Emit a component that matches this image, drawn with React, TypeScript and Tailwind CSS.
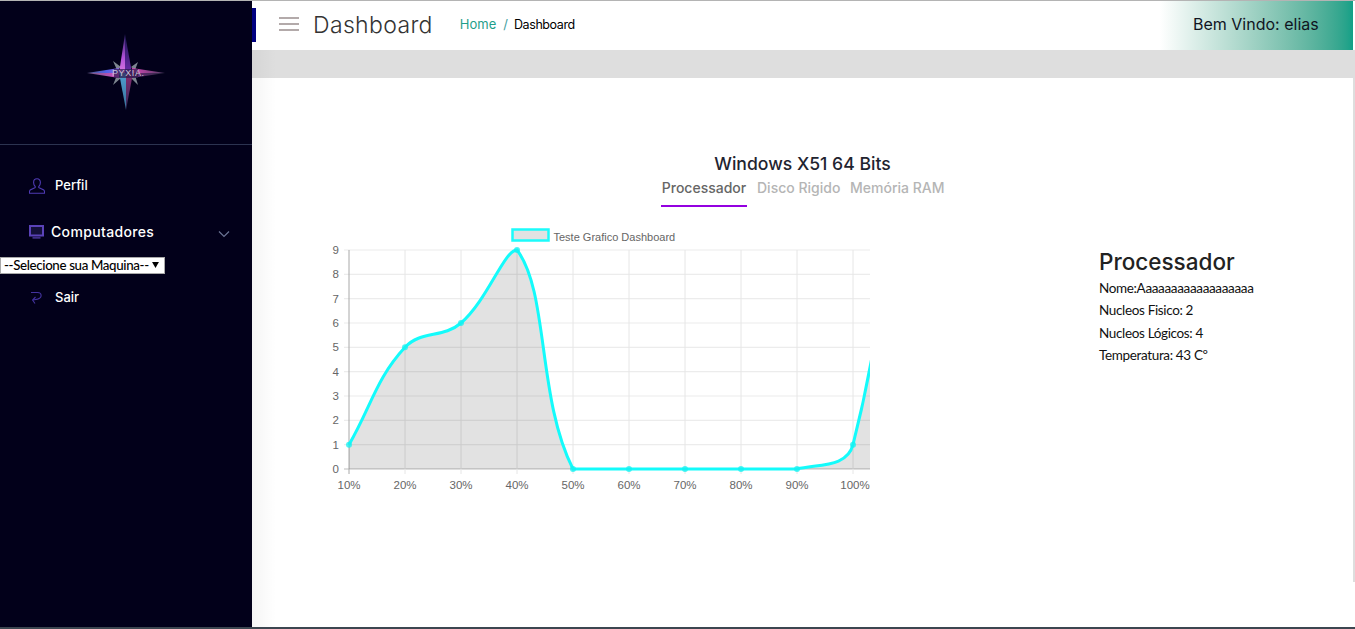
import React from 'react';

const ticks = [349, 405, 461, 517, 573, 629, 685, 741, 797, 853];
const labels = ['10%', '20%', '30%', '40%', '50%', '60%', '70%', '80%', '90%', '100%'];
const values = [1, 5, 6, 9, 0, 0, 0, 0, 0, 1, 18];

const yFor = (v: number) => 469 - v * (219 / 9);

// same spline as chart.js with tension 0.4
function buildCurve() {
  const pts = values.map((v, i) => ({ x: 349 + i * 56, y: yFor(v) }));
  const ctrl = pts.map((p, i) => {
    const prev = pts[i - 1] ?? p;
    const next = pts[i + 1] ?? p;
    const d01 = Math.hypot(p.x - prev.x, p.y - prev.y);
    const d12 = Math.hypot(next.x - p.x, next.y - p.y);
    const sum = d01 + d12 || 1;
    const fa = (0.4 * d01) / sum;
    const fb = (0.4 * d12) / sum;
    const clampY = (y: number) => (i >= 9 ? y : Math.min(469, Math.max(250, y)));
    return {
      px: p.x - fa * (next.x - prev.x),
      py: clampY(p.y - fa * (next.y - prev.y)),
      nx: p.x + fb * (next.x - prev.x),
      ny: clampY(p.y + fb * (next.y - prev.y)),
    };
  });
  let d = `M${pts[0].x} ${pts[0].y}`;
  for (let i = 1; i < pts.length; i++) {
    d += ` C${ctrl[i - 1].nx} ${ctrl[i - 1].ny} ${ctrl[i].px} ${ctrl[i].py} ${pts[i].x} ${pts[i].y}`;
  }
  return { d, pts };
}

function Chart() {
  const { d, pts } = buildCurve();
  return (
    <svg width="560" height="275" viewBox="320 222 560 275" className="block shrink-0">
      <defs>
        <clipPath id="plot">
          <rect x="340" y="240" width="530" height="240" />
        </clipPath>
      </defs>
      <rect x="512.5" y="229.5" width="36" height="11" fill="#e2e2e2" stroke="#1dfbfb" strokeWidth="2.5" />
      <text x="553.5" y="241" fontSize="11" fill="#666" fontFamily="Liberation Sans, sans-serif">
        Teste Grafico Dashboard
      </text>
      {[0, 1, 2, 3, 4, 5, 6, 7, 8, 9].map((v) => (
        <g key={v}>
          <line x1="344" x2="870" y1={yFor(v)} y2={yFor(v)} stroke={v === 0 ? '#bdbdbd' : '#ececec'} strokeWidth="1.2" />
          <text x="339" y={yFor(v) + 4} textAnchor="end" fontSize="11.5" fill="#666" fontFamily="Liberation Sans, sans-serif">
            {v}
          </text>
        </g>
      ))}
      {ticks.map((x, i) => (
        <g key={x}>
          <line x1={x} x2={x} y1="250" y2="474" stroke={i === 0 ? '#a8a8a8' : '#e6e6e6'} strokeWidth="1" />
          <text x={i === 9 ? x + 2 : x} y="489" textAnchor="middle" fontSize="11.5" fill="#666" fontFamily="Liberation Sans, sans-serif">
            {labels[i]}
          </text>
        </g>
      ))}
      <g clipPath="url(#plot)">
        <path d={`${d} L909 469 L349 469 Z`} fill="rgba(0,0,0,0.115)" />
        <path d={d} fill="none" stroke="#14fbfb" strokeWidth="3" />
        {pts.map((p) => (
          <circle key={p.x} cx={p.x} cy={p.y} r="3" fill="rgba(20,240,240,0.75)" />
        ))}
      </g>
    </svg>
  );
}

function Logo() {
  return (
    <div className="relative w-[80px] h-[78px]">
      <svg width="80" height="78" viewBox="0 0 80 78" className="block">
        <defs>
          <linearGradient id="upL" x1="0" y1="0" x2="0" y2="1">
            <stop offset="0" stopColor="#2c2060" />
            <stop offset="0.6" stopColor="#b050d8" />
            <stop offset="1" stopColor="#d878e0" />
          </linearGradient>
          <linearGradient id="upR" x1="0" y1="0" x2="0" y2="1">
            <stop offset="0" stopColor="#1c1650" />
            <stop offset="1" stopColor="#6a2aa8" />
          </linearGradient>
          <linearGradient id="downL" x1="0" y1="0" x2="0" y2="1">
            <stop offset="0" stopColor="#4f9fd0" />
            <stop offset="1" stopColor="#3a6f98" />
          </linearGradient>
          <linearGradient id="downR" x1="0" y1="0" x2="0" y2="1">
            <stop offset="0" stopColor="#8a2a70" />
            <stop offset="1" stopColor="#2f2a58" />
          </linearGradient>
          <linearGradient id="leftT" x1="0" y1="0" x2="1" y2="0">
            <stop offset="0" stopColor="#5a5a80" />
            <stop offset="0.6" stopColor="#4f62e8" />
            <stop offset="1" stopColor="#8a60e0" />
          </linearGradient>
          <linearGradient id="leftB" x1="0" y1="0" x2="1" y2="0">
            <stop offset="0" stopColor="#6a5a80" />
            <stop offset="1" stopColor="#d850c8" />
          </linearGradient>
          <linearGradient id="rightT" x1="0" y1="0" x2="1" y2="0">
            <stop offset="0" stopColor="#d848b8" />
            <stop offset="1" stopColor="#4a3a60" />
          </linearGradient>
          <linearGradient id="rightB" x1="0" y1="0" x2="1" y2="0">
            <stop offset="0" stopColor="#6a2a78" />
            <stop offset="1" stopColor="#2a2a40" />
          </linearGradient>
        </defs>
        <path d="M27 27 L35 33 L31 36 Z M52 28 L45 33 L49 36 Z M27 51 L35 44 L31 41 Z M52 51 L45 44 L49 41 Z" fill="#7d8590" />
        <path d="M39 0 L39 39 L33 39 Z" fill="url(#upL)" />
        <path d="M39 0 L39 39 L46 39 Z" fill="url(#upR)" />
        <path d="M33 39 L40 39 L40 76 Z" fill="url(#downL)" />
        <path d="M40 39 L47 39 L40 76 Z" fill="url(#downR)" />
        <path d="M1 39 L33 34 L33 39 Z" fill="url(#leftT)" />
        <path d="M1 39 L33 39 L33 44 Z" fill="url(#leftB)" />
        <path d="M79 39 L46 34 L46 39 Z" fill="url(#rightT)" />
        <path d="M79 39 L46 39 L46 44 Z" fill="url(#rightB)" />
        <path d="M28 35 L52 35 L52 44 L28 44 Z" fill="#2a1a4c" opacity="0.7" />
      </svg>
      <span className="absolute left-[26px] top-[33px] text-[9px] leading-[12px] text-[#c9c4d8] tracking-[0.6px] font-['Liberation_Sans',sans-serif]">
        PYXIA.
      </span>
    </div>
  );
}

function UserIcon() {
  return (
    <svg width="16" height="16" viewBox="0 0 16 16" fill="none" stroke="#4f3ab4" strokeWidth="1.1" className="shrink-0">
      <path d="M8 .8c-2.2 0-3.4 1.6-3.4 3.6 0 1.6.7 3 1.5 3.9.3.4.2 1.2-.3 1.5L1.2 12c-.6.4-.8 1-.8 3.2h15.2c0-2.2-.2-2.8-.8-3.2l-4.6-2.2c-.5-.3-.6-1.1-.3-1.5.8-.9 1.5-2.3 1.5-3.9C11.4 2.4 10.2.8 8 .8z" />
    </svg>
  );
}

function MonitorIcon() {
  return (
    <svg width="15" height="14" viewBox="0 0 15 14" fill="none" className="shrink-0">
      <rect x="1" y="1" width="13" height="9.5" fill="#14103a" stroke="#5a42b8" strokeWidth="2" />
      <path d="M3.5 12.9h8" stroke="#5a42b8" strokeWidth="1.2" />
    </svg>
  );
}

function ReturnIcon() {
  return (
    <svg width="13" height="14" viewBox="0 0 13 14" fill="none" stroke="#43329e" strokeWidth="1.1" className="shrink-0">
      <path d="M1 1.5h6.5c2.4 0 3.6 1.3 3.6 3s-1.2 3-3.6 3.6L3 9" />
      <path d="M5.5 6 L2.6 9 L5 12.5" />
    </svg>
  );
}

export default function App() {
  return (
    <div className="h-[629px] w-[1355px] overflow-hidden flex flex-col bg-white font-['Inter',sans-serif]">
      <div className="h-px bg-[#b4b4b4] shrink-0" />
      <div className="flex flex-1 min-h-0">
        <aside className="w-[252px] shrink-0 bg-[#02001a] text-white">
          <div className="h-[144px] border-b border-[#2c3350] flex justify-center pt-[33px]">
            <Logo />
          </div>
          <nav className="text-[13px] font-medium">
            <div className="flex items-center gap-[10px] pl-[29px] mt-[26px] h-[30px]">
              <UserIcon />
              <span>Perfil</span>
            </div>
            <div className="flex items-center pl-[29px] pr-[22px] mt-[16px] h-[30px]">
              <MonitorIcon />
              <span className="ml-[7px] text-[14px] tracking-[0.35px] -mt-[1px]">Computadores</span>
              <svg width="12" height="8" viewBox="0 0 12 8" fill="none" stroke="#6b7394" strokeWidth="1.2" className="ml-auto mt-[3px]">
                <path d="M1 1.5l5 5 5-5" />
              </svg>
            </div>
            <div className="relative w-[165px] h-[17px] mt-[10px]">
              <select className="appearance-none block w-full h-full bg-white border border-[#a9a9a9] text-black text-[13.3px] tracking-[-0.35px] leading-[15px] pl-[3px] rounded-none font-['Lato',sans-serif]">
                <option>--Selecione sua Maquina--</option>
              </select>
              <svg width="7" height="6" viewBox="0 0 8 7" className="absolute right-[6px] top-[5px] pointer-events-none">
                <path d="M0 0h8L4 7z" fill="#000" />
              </svg>
            </div>
            <div className="flex items-center gap-[12px] pl-[30px] h-[30px] mt-[9px]">
              <ReturnIcon />
              <span>Sair</span>
            </div>
          </nav>
        </aside>

        <main className="flex-1 min-w-0 flex flex-col relative">
          <header className="h-[49px] shrink-0 w-[1101px] bg-white flex items-center relative">
            <div className="absolute left-0 top-[7px] w-[4px] h-[34px] bg-[#00007f]" />
            <div className="ml-[27px] w-[20px] flex flex-col gap-[4px] mb-[3px]">
              <span className="h-[2px] bg-[#b3aaaa]" />
              <span className="h-[2px] bg-[#b3aaaa]" />
              <span className="h-[2px] bg-[#b3aaaa]" />
            </div>
            <h1 className="ml-[14px] text-[23px] font-light text-[#333] leading-none tracking-[0.35px] -mt-[1px]">Dashboard</h1>
            <div className="ml-[27px] flex items-center text-[13px] -mt-[1px]">
              <span className="text-[#1f9e8a]">Home</span>
              <span className="mx-[7px] text-[#45a0a0]">/</span>
              <span className="text-black text-[12.5px] tracking-[-0.4px] -ml-px">Dashboard</span>
            </div>
            <div className="ml-auto w-[193px] h-full bg-gradient-to-r from-white to-[#11a087] flex items-center pl-[33px] pb-[3px] text-[16px] text-[#10151f] whitespace-nowrap">
              Bem Vindo: elias
            </div>
          </header>

          <div className="h-[28px] shrink-0 bg-[#dedede]" />

          <section className="h-[504px] shrink-0 w-[1101px] bg-white rounded-t-[4px] pt-[72px]">
            <h2 className="text-center text-[17.6px] leading-[28px] font-medium text-[#1f2430]">Windows X51 64 Bits</h2>
            <div className="flex justify-center gap-[10px] pr-[1px] text-[14px] font-medium h-[29px] leading-[20px] text-[#b5b5b5] whitespace-nowrap">
              <span className="text-[#666] border-b-2 border-[#9400e0] h-[29px] w-[86px] text-center">Processador</span>
              <span className="w-[83px] text-center">Disco Rigido</span>
              <span className="w-[93px] text-center">Memória RAM</span>
            </div>
            <div className="flex mt-[15px] pl-[68px]">
              <Chart />
              <div className="ml-[219px] pt-[25px]">
                <h3 className="text-[22.5px] leading-[30px] font-medium text-[#222]">Processador</h3>
                <div className="font-['Lato',sans-serif] text-[13.5px] tracking-[-0.35px] leading-[22.4px] text-[#111]">
                  <p>Nome:Aaaaaaaaaaaaaaaaaa</p>
                  <p>Nucleos Fisico: 2</p>
                  <p>Nucleos Lógicos: 4</p>
                  <p>Temperatura: 43 Cº</p>
                </div>
              </div>
            </div>
          </section>

          {/* sombra do menu lateral */}
          <div className="absolute left-0 top-[49px] bottom-0 w-[24px] bg-gradient-to-r from-black/[0.04] to-transparent pointer-events-none" />
          <div className="absolute right-0 top-[77px] w-[2px] h-[504px] bg-[#dedede]" />
        </main>
      </div>
      <div className="h-[2px] bg-[#3c4650] shrink-0" />
    </div>
  );
}
